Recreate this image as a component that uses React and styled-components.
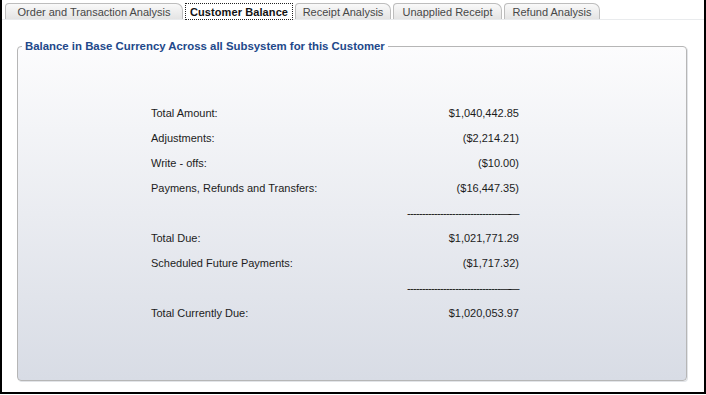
import React from "react";
import styled, { createGlobalStyle, css } from "styled-components";

const GlobalStyle = createGlobalStyle`
  html, body { margin: 0; padding: 0; background: #fff; }
  body { font-family: "Liberation Sans", Arial, sans-serif; }
`;

const Frame = styled.div`
  box-sizing: border-box;
  width: 706px;
  height: 394px;
  border: 2px solid #000;
  border-top: none;
  background: #fff;
  display: flex;
  flex-direction: column;
`;

const TabBar = styled.div`
  display: flex;
  align-items: flex-end;
  gap: 2px;
  padding: 3px 0 0 3px;
  border-bottom: 1px solid #e9ebed;
`;

const Tab = styled.div`
  box-sizing: border-box;
  width: ${(p) => p.$w}px;
  height: 16px;
  display: flex;
  align-items: center;
  justify-content: center;
  font: 11px "Liberation Sans", Arial, sans-serif;
  color: #474747;
  border: 1px solid #bdbdbd;
  border-bottom: none;
  border-radius: 4px 7px 0 0;
  background: linear-gradient(#f9f9f9, #e4e4e4);
  white-space: nowrap;
  ${(p) =>
    p.$active &&
    css`
      height: 17px;
      margin-bottom: -1px;
      background: #fff;
      border: 1px dotted #222;
      border-radius: 0;
      font-weight: bold;
      letter-spacing: 0.1px;
      color: #111;
    `}
`;

const Content = styled.div`
  flex: 1;
  display: flex;
  padding: 20px 17px 11px 15px;
  min-height: 0;
`;

const Group = styled.fieldset`
  flex: 1;
  min-width: 0;
  margin: 0;
  padding: 0;
  border: 1px solid #b6b6b6;
  border-radius: 4px;
  background: linear-gradient(#fcfcfd, #d8dce5);
  box-shadow: 1px 1px 0 #e2e4e8;
`;

const Legend = styled.legend`
  margin-left: 4px;
  padding: 0 3px;
  font: bold 11.4px "Liberation Sans", Arial, sans-serif;
  line-height: 13px;
  color: #22488a;
`;

const Summary = styled.div`
  margin: 47px 0 0 133px;
  width: 368px;
  display: grid;
  grid-template-columns: 1fr auto;
  grid-auto-rows: 25px;
  align-items: center;
  font: 11px "Liberation Sans", Arial, sans-serif;
  color: #1c1c1c;
`;

const Label = styled.div`
  white-space: nowrap;
`;

const Value = styled.div`
  text-align: right;
  white-space: nowrap;
`;

const Rule = styled.div`
  grid-column: 2;
  text-align: right;
  white-space: nowrap;
  letter-spacing: -0.66px;
  padding-right: 0;
  margin-right: -2px;
  color: #111;
`;

const Solid = styled.span`
  letter-spacing: -2.6px;
  margin-right: 4px;
`;

const tabs = [
  { label: "Order and Transaction Analysis", w: 178 },
  { label: "Customer Balance", w: 108, active: true },
  { label: "Receipt Analysis", w: 96 },
  { label: "Unapplied Receipt", w: 109 },
  { label: "Refund Analysis", w: 96 },
];

const rows = [
  { label: "Total Amount:", value: "$1,040,442.85" },
  { label: "Adjustments:", value: "($2,214.21)" },
  { label: "Write - offs:", value: "($10.00)" },
  { label: "Paymens, Refunds and Transfers:", value: "($16,447.35)" },
  { rule: true },
  { label: "Total Due:", value: "$1,021,771.29" },
  { label: "Scheduled Future Payments:", value: "($1,717.32)" },
  { rule: true },
  { label: "Total Currently Due:", value: "$1,020,053.97" },
];

export default function App() {
  return (
    <>
      <GlobalStyle />
      <Frame>
        <TabBar>
          {tabs.map((t) => (
            <Tab key={t.label} $w={t.w} $active={t.active}>
              {t.label}
            </Tab>
          ))}
        </TabBar>
        <Content>
          <Group>
            <Legend>Balance in Base Currency Across all Subsystem for this Customer</Legend>
            <Summary>
              {rows.map((r, i) =>
                r.rule ? (
                  <Rule key={i}>
                    {"-------------------------------"}
                    <Solid>{"——"}</Solid>
                  </Rule>
                ) : (
                  <React.Fragment key={i}>
                    <Label>{r.label}</Label>
                    <Value>{r.value}</Value>
                  </React.Fragment>
                )
              )}
            </Summary>
          </Group>
        </Content>
      </Frame>
    </>
  );
}
